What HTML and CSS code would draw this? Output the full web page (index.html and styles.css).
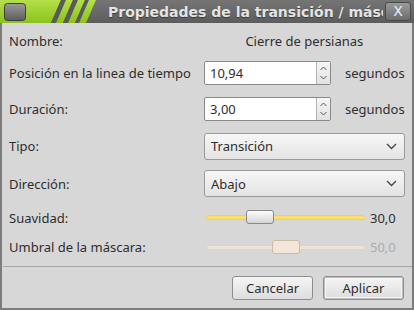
FILE: index.html
```html
<!DOCTYPE html>
<html lang="es">
<head>
  <meta charset="UTF-8">
  <title>Propiedades de la transición / máscara</title>
  <link rel="stylesheet" href="styles.css">
</head>
<body>
  <div class="window">
    <div class="titlebar">
      <svg class="tb-deco" width="104" height="23" viewBox="0 0 104 23">
        <defs>
          <linearGradient id="green" x1="0" y1="0" x2="0" y2="1">
            <stop offset="0" stop-color="#b4e04a"/>
            <stop offset="1" stop-color="#8cc21e"/>
          </linearGradient>
          <linearGradient id="knob" x1="0" y1="0" x2="0" y2="1">
            <stop offset="0" stop-color="#9a9a9a"/>
            <stop offset="1" stop-color="#5c5c5c"/>
          </linearGradient>
        </defs>
        <polygon points="0,0 61,0 51,23 0,23" fill="url(#green)"/>
        <polygon points="61,0 66,0 56,23 51,23" fill="#5a5a5a"/>
        <polygon points="66,0 73,0 63,23 56,23" fill="url(#green)"/>
        <polygon points="73,0 78,0 68,23 63,23" fill="#5a5a5a"/>
        <polygon points="78,0 85,0 75,23 68,23" fill="url(#green)"/>
        <polygon points="85,0 89,0 79,23 75,23" fill="#5a5a5a"/>
        <polygon points="89,0 96,0 86,23 79,23" fill="url(#green)"/>
        <rect x="4.5" y="3.5" width="21" height="17" rx="3" fill="url(#knob)" stroke="#3e3e3e"/>
      </svg>
      <div class="tb-title">Propiedades de la transición / máscara</div>
      <span class="tb-close">X</span>
    </div>

    <div class="content">
      <div class="label">Nombre:</div>
      <div class="value-center">Cierre de persianas</div>

      <div class="label">Posición en la linea de tiempo</div>
      <div class="with-unit">
        <div class="spin">
          <span class="spin-text">10,94</span>
          <span class="spin-btns">
            <svg width="9" height="18" viewBox="0 0 9 18"><path d="M1.5 6 L4.5 3 L7.5 6 M1.5 12 L4.5 15 L7.5 12" fill="none" stroke="#555" stroke-width="1"/></svg>
          </span>
        </div>
        <span class="unit">segundos</span>
      </div>

      <div class="label">Duración:</div>
      <div class="with-unit">
        <div class="spin">
          <span class="spin-text">3,00</span>
          <span class="spin-btns">
            <svg width="9" height="18" viewBox="0 0 9 18"><path d="M1.5 6 L4.5 3 L7.5 6 M1.5 12 L4.5 15 L7.5 12" fill="none" stroke="#555" stroke-width="1"/></svg>
          </span>
        </div>
        <span class="unit">segundos</span>
      </div>

      <div class="label">Tipo:</div>
      <div class="combo">
        <span>Transición</span>
        <svg width="11" height="7" viewBox="0 0 11 7"><path d="M1 1 L5.5 5.5 L10 1" fill="none" stroke="#444" stroke-width="1.3"/></svg>
      </div>

      <div class="label">Dirección:</div>
      <div class="combo">
        <span>Abajo</span>
        <svg width="11" height="7" viewBox="0 0 11 7"><path d="M1 1 L5.5 5.5 L10 1" fill="none" stroke="#444" stroke-width="1.3"/></svg>
      </div>

      <div class="label">Suavidad:</div>
      <div class="scale">
        <div class="track">
          <span class="thumb" style="left: 39px"></span>
        </div>
        <span class="scale-value">30,0</span>
      </div>

      <div class="label">Umbral de la máscara:</div>
      <div class="scale disabled">
        <div class="track">
          <span class="thumb" style="left: 65px"></span>
        </div>
        <span class="scale-value">50,0</span>
      </div>
    </div>

    <div class="separator"></div>

    <div class="actions">
      <button class="btn">Cancelar</button>
      <button class="btn btn-default">Aplicar</button>
    </div>
  </div>
</body>
</html>
```

FILE: styles.css
```css
body {
  margin: 0;
  font-family: "Noto Sans", "DejaVu Sans", sans-serif;
  font-size: 13px;
  color: #2e2e2e;
}

.window {
  width: 414px;
  height: 310px;
  box-sizing: border-box;
  background-color: #d7d7d7;
  border: 2px solid #7c7c7c;
  border-top: none;
  display: flex;
  flex-direction: column;
}

.titlebar {
  height: 23px;
  margin: 0 -2px;
  display: flex;
  align-items: center;
  background: linear-gradient(#757575, #5c5c5c);
  overflow: hidden;
}

.tb-deco {
  flex: none;
  display: block;
}

.tb-title {
  flex: 1;
  min-width: 0;
  margin-left: 4px;
  white-space: nowrap;
  overflow: hidden;
  font-family: "DejaVu Sans", sans-serif;
  font-weight: bold;
  font-size: 14px;
  color: #e4e4e4;
  text-shadow: 0 1px 1px #3a3a3a;
}

.tb-close {
  flex: none;
  width: 24px;
  height: 17px;
  margin: 0 3px 0 2px;
  border: 1px solid #4a4a4a;
  border-radius: 3px;
  background: linear-gradient(#9a9a9a, #6c6c6c);
  color: #eee;
  font-family: "DejaVu Sans", sans-serif;
  font-size: 14px;
  line-height: 17px;
  text-align: center;
}

.content {
  display: grid;
  grid-template-columns: 195px 1fr;
  grid-template-rows: 30px 34px 37px 38px 37px 31px 28px;
  align-items: center;
  padding: 3px 9px 0 7px;
}

.value-center {
  text-align: center;
}

.with-unit {
  display: flex;
  align-items: center;
  gap: 14px;
}

.spin {
  width: 127px;
  height: 24px;
  box-sizing: border-box;
  display: flex;
  border: 1px solid #8a8a8a;
  border-radius: 2px;
  background: #fff;
}

.spin-text {
  flex: 1;
  padding-left: 5px;
  line-height: 22px;
}

.spin-btns {
  width: 13px;
  display: flex;
  align-items: center;
  justify-content: center;
  border-left: 1px solid #b4b4b4;
  background: linear-gradient(#f6f6f6, #e2e2e2);
}

.combo {
  height: 27px;
  box-sizing: border-box;
  display: flex;
  align-items: center;
  justify-content: space-between;
  padding: 0 7px 0 6px;
  border: 1px solid #999;
  border-radius: 3px;
  background: linear-gradient(#f7f7f7, #e3e3e3);
}

.scale {
  display: flex;
  align-items: center;
}

.track {
  position: relative;
  width: 159px;
  height: 5px;
  margin-left: 2px;
  box-sizing: border-box;
  border: 1px solid #f0cf5a;
  border-radius: 3px;
  background: #fbdf6c;
}

.thumb {
  position: absolute;
  top: -6px;
  width: 28px;
  height: 14px;
  box-sizing: border-box;
  border: 1px solid #8a8a8a;
  border-radius: 3px;
  background: linear-gradient(#fbfbfb, #d6d6d6);
}

.scale-value {
  margin-left: 5px;
}

.disabled .track {
  border-color: #e2d2bc;
  background: #efe3d2;
}

.disabled .thumb {
  border-color: #cbbba6;
  background: #f2e6d8;
}

.disabled .scale-value {
  color: #ababab;
}

.separator {
  margin: 5px 0 0 1px;
  height: 1px;
  background: #a6a6a6;
}

.actions {
  display: flex;
  justify-content: flex-end;
  gap: 10px;
  padding: 9px 8px 0 0;
}

.btn {
  width: 81px;
  height: 24px;
  font-family: inherit;
  font-size: 13px;
  color: #2e2e2e;
  border: 1px solid #8e8e8e;
  border-radius: 3px;
  background: linear-gradient(#f5f5f5, #dddddd);
  padding: 0;
}

.btn-default {
  box-shadow: 0 0 0 1px #bdbdbd inset, 0 0 0 2px #f6f6f6 inset;
}
```
